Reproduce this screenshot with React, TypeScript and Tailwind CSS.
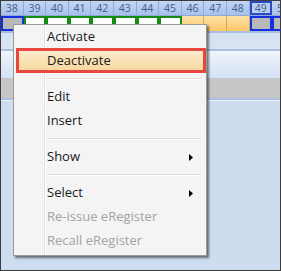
import React from "react";

const cols = [38, 39, 40, 41, 42, 43, 44, 45, 46, 47, 48, 49, 50];

function Arrow() {
  return (
    <svg width="4" height="7" viewBox="0 0 4 7" className="block">
      <path d="M0 0 L4 3.5 L0 7 Z" fill="#000" />
    </svg>
  );
}

function Item({ label, disabled, arrow }: { label: string; disabled?: boolean; arrow?: boolean }) {
  return (
    <div className="h-[24px] flex items-center pl-[33px] pr-[13px]">
      <span className={disabled ? "text-[#a3a3a3]" : "text-[#1a1a1a]"}>{label}</span>
      {arrow && (
        <span className="ml-auto">
          <Arrow />
        </span>
      )}
    </div>
  );
}

function Sep() {
  return (
    <div className="h-[12px] flex items-center pl-[33px] pr-[4px]">
      <div className="w-full border-t border-[#dedede] border-b border-b-white" />
    </div>
  );
}

export default function App() {
  return (
    <div
      className="relative w-[281px] h-[271px] overflow-hidden border border-[#3c3c3c] bg-[#cddcee]"
      style={{ fontFamily: '"Open Sans", "Noto Sans", sans-serif' }}
    >
      {/* header row */}
      <div className="flex h-[15px] bg-gradient-to-b from-[#c4d7f3] to-[#a7c1ea] border-b border-[#8ea9d6]">
        {cols.map((c) => (
          <div
            key={c}
            className={
              "w-[22.6px] shrink-0 flex items-center justify-center overflow-hidden text-[10.5px] leading-none text-[#3f5d8d] " +
              (c === 49 ? "border-2 border-[#2a48c8] bg-[#b9cff0]" : "border-r border-[#8eaad6]")
            }
          >
            {c}
          </div>
        ))}
      </div>
      {/* row 2 */}
      <div className="flex h-[15px]">
        {cols.map((c) => {
          let cls = "";
          if (c === 38 || c === 49) cls = "border-2 border-[#1330e0] bg-[#b8b8b8]";
          else if (c >= 39 && c <= 45) cls = "border-2 border-[#168c16] bg-white";
          else if (c >= 46 && c <= 48) cls = "border-r border-[#d6a860] bg-gradient-to-b from-[#fde2a8] to-[#fbc866]";
          else cls = "border-2 border-[#1330e0] bg-[#b8b8b8]";
          return <div key={c} className={"w-[22.6px] shrink-0 " + cls} />;
        })}
      </div>
      {/* bands */}
      <div className="h-[2px] bg-[#a9bfe1]" />
      <div className="h-[16px] bg-[#d7e2f2]" />
      <div className="h-[2px] bg-[#a9c0e2]" />
      <div className="h-[27px] bg-gradient-to-b from-[#f0f5fd] to-[#d3e1f5]" />
      <div className="h-[20px] bg-[#c6c6c6]" />
      <div className="h-[2px] bg-[#a9c0e2]" />
      <div className="h-[1px] bg-[#e9f0fa]" />

      {/* context menu */}
      <div className="absolute left-[12px] top-[23px] w-[194px] bg-[#f4f4f4] border border-[#9a9a9a] shadow-[2px_2px_2px_rgba(0,0,0,0.5)] text-[13px] pb-[2px]">
        <div className="absolute left-[30px] top-0 bottom-0 w-[2px] border-l border-[#e2e2e2] border-r border-r-white" />
        <div className="relative">
          <Item label="Activate" />
          <div className="relative">
            <div className="absolute left-[2px] right-0 top-[-1px] h-[25px] border-[3px] border-[#e8473f] bg-gradient-to-b from-[#fcebcb] to-[#f8d8a2]" />
            <div className="relative">
              <Item label="Deactivate" />
            </div>
          </div>
          <Sep />
          <Item label="Edit" />
          <Item label="Insert" />
          <Sep />
          <Item label="Show" arrow />
          <Sep />
          <Item label="Select" arrow />
          <Item label="Re-issue eRegister" disabled />
          <Item label="Recall eRegister" disabled />
        </div>
      </div>
    </div>
  );
}
